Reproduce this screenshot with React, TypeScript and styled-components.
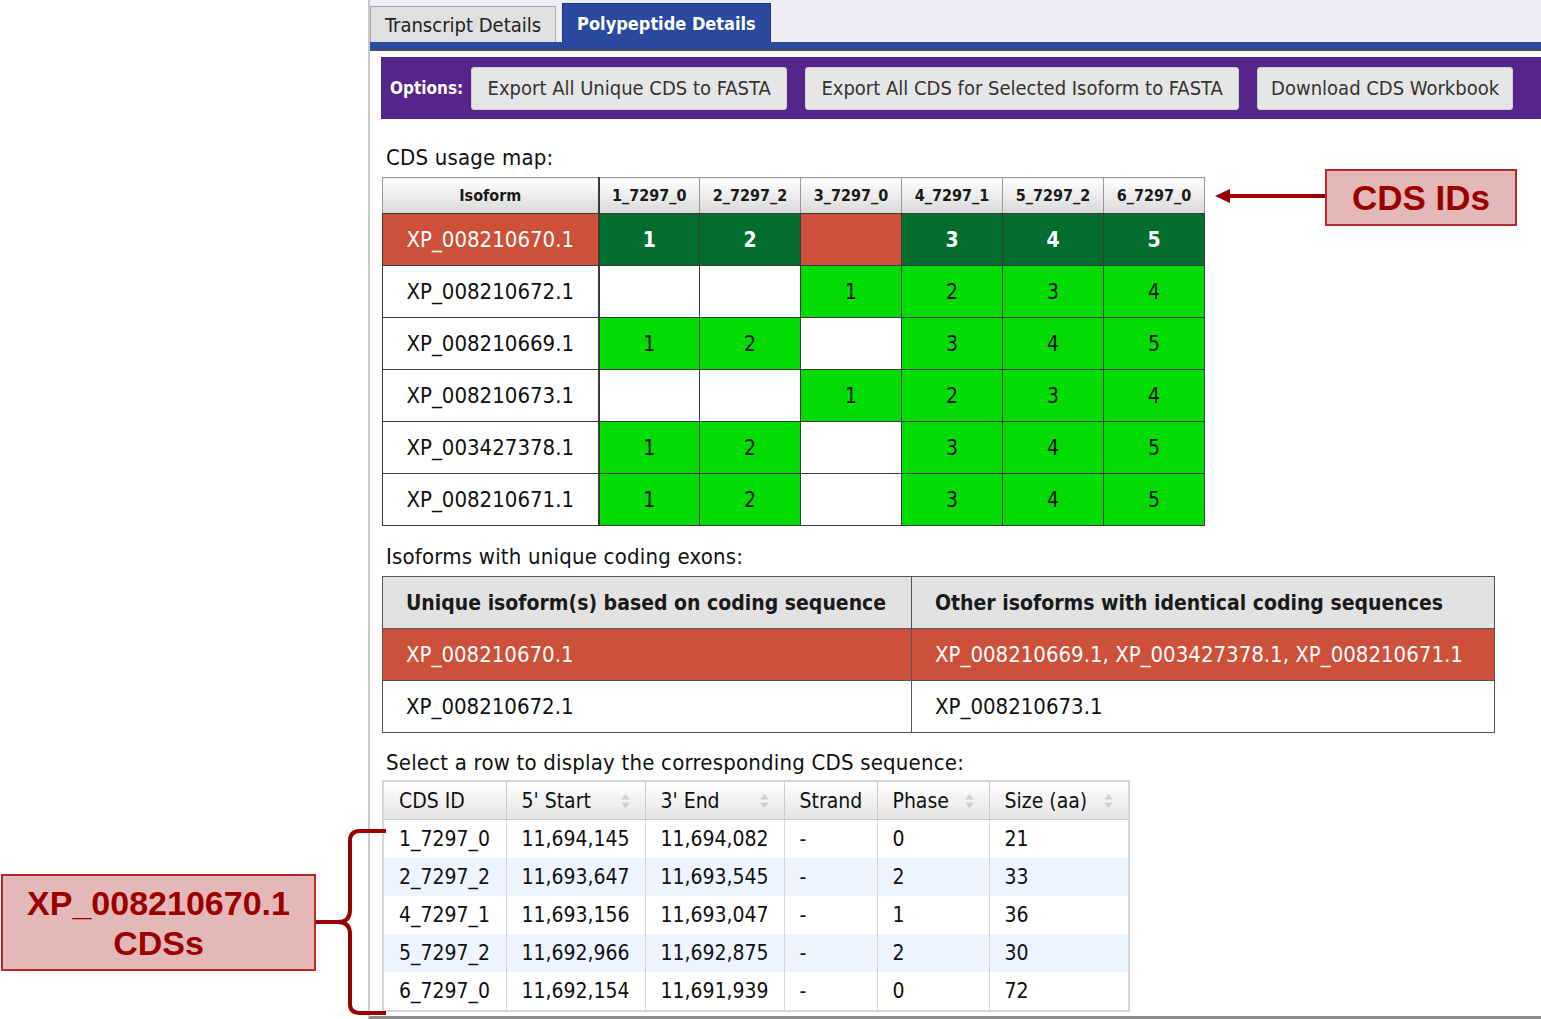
import React from 'react';
import styled, { createGlobalStyle } from 'styled-components';

const GlobalStyle = createGlobalStyle`
  html, body {
    margin: 0;
    padding: 0;
    background: #ffffff;
  }
  body {
    font-family: "DejaVu Sans Condensed", "DejaVu Sans", sans-serif;
    font-stretch: condensed;
    color: #111111;
  }
`;

const Page = styled.div`
  position: relative;
  display: flex;
  width: 1541px;
  height: 1019px;
  overflow: hidden;
`;

const Gutter = styled.div`
  width: 368px;
  flex-shrink: 0;
`;

const Panel = styled.div`
  flex: 1;
  box-sizing: border-box;
  height: 1019px;
  border-left: 2px solid #c9c9c9;
  border-bottom: 3px solid #8c8c8c;
  display: flex;
  flex-direction: column;
`;

const TabStrip = styled.div`
  height: 42px;
  background: #eeedf6;
  display: flex;
  align-items: flex-end;
  gap: 6px;
`;

const Tab = styled.div<{ $active?: boolean }>`
  box-sizing: border-box;
  height: ${(p) => (p.$active ? '39px' : '36px')};
  padding: 0 14px;
  display: flex;
  align-items: center;
  white-space: nowrap;
  font-size: ${(p) => (p.$active ? '18px' : '20px')};
  font-weight: ${(p) => (p.$active ? 700 : 400)};
  color: ${(p) => (p.$active ? '#ffffff' : '#222222')};
  background: ${(p) => (p.$active ? '#2b4a9f' : '#e0e0e0')};
  border: 1px solid ${(p) => (p.$active ? '#1f3578' : '#a9a9a9')};
  border-bottom: none;
`;

const TabRule = styled.div`
  height: 7px;
  background: #2b4a9f;
  border-bottom: 2px solid #4a4f5c;
`;

const Content = styled.div`
  padding: 6px 0 0 11px;
`;

const OptionsBar = styled.div`
  height: 62px;
  background: #55258b;
  display: flex;
  align-items: center;
  gap: 18px;
  padding: 0 9px;
`;

const OptionsLabel = styled.span`
  color: #ffffff;
  font-weight: 700;
  font-size: 17px;
  white-space: nowrap;
  margin-right: -10px;
`;

const OptionButton = styled.button<{ $width: number }>`
  flex-shrink: 0;
  width: ${(p) => p.$width}px;
  height: 43px;
  padding: 0;
  white-space: nowrap;
  font-family: inherit;
  font-stretch: inherit;
  font-size: 20px;
  color: #333333;
  background: #e6e6e6;
  border: 1px solid #cfcfcf;
  border-radius: 3px;
`;

const SectionLabel = styled.div<{ $top: number }>`
  margin: ${(p) => p.$top}px 0 7px 5px;
  font-size: 22px;
  letter-spacing: 0.2px;
  line-height: 24px;
  color: #111111;
`;

const MapTable = styled.table`
  border-collapse: collapse;
  table-layout: fixed;
  width: 823px;
  margin-left: 1px;
  border: 1px solid #3a3a3a;
`;

const MapHead = styled.th<{ $first?: boolean }>`
  height: 35px;
  padding: 0;
  font-size: 16px;
  font-weight: 700;
  color: #1a1a1a;
  background: linear-gradient(#ffffff, #d9d9d9);
  border: 1px solid #9a9a9a;
  border-right: ${(p) => (p.$first ? '2px solid #3a3a3a' : '1px solid #9a9a9a')};
  border-bottom: 1px solid #3a3a3a;
`;

const IsoformCell = styled.td<{ $selected?: boolean }>`
  height: 51px;
  padding: 0;
  text-align: center;
  font-size: 22px;
  color: ${(p) => (p.$selected ? '#ffffff' : '#111111')};
  background: ${(p) => (p.$selected ? '#cd503b' : '#ffffff')};
  border: 1px solid #3a3a3a;
  border-right: 2px solid #3a3a3a;
`;

const UsageCell = styled.td<{ $kind: 'dark' | 'bright' | 'red' | 'empty' }>`
  padding: 0;
  text-align: center;
  font-size: 21px;
  font-weight: ${(p) => (p.$kind === 'dark' ? 700 : 400)};
  color: ${(p) => (p.$kind === 'dark' ? '#ffffff' : '#111111')};
  background: ${(p) =>
    p.$kind === 'dark'
      ? '#036c2f'
      : p.$kind === 'bright'
      ? '#02dc02'
      : p.$kind === 'red'
      ? '#cd503b'
      : '#ffffff'};
  border: 1px solid #3a3a3a;
`;

const UniqueTable = styled.table`
  border-collapse: collapse;
  table-layout: fixed;
  width: 1112px;
  margin-left: 1px;
  border: 1px solid #555555;
`;

const UniqueHead = styled.th`
  height: 51px;
  padding: 0 0 0 23px;
  text-align: left;
  font-size: 21px;
  font-weight: 700;
  color: #1a1a1a;
  background: #e2e2e2;
  border: 1px solid #555555;
`;

const UniqueCell = styled.td<{ $selected?: boolean }>`
  height: 51px;
  padding: 0 0 0 23px;
  font-size: 22px;
  color: ${(p) => (p.$selected ? '#ffffff' : '#111111')};
  background: ${(p) => (p.$selected ? '#cd503b' : '#ffffff')};
  border: 1px solid #555555;
`;

const CdsTable = styled.table`
  border-collapse: collapse;
  table-layout: fixed;
  width: 746px;
  margin: -2px 0 0 1px;
  border: 2px solid #d6d6d6;
`;

const CdsHead = styled.th`
  height: 37px;
  padding: 0 14px 0 15px;
  text-align: left;
  font-size: 21px;
  font-weight: 400;
  color: #111111;
  background: linear-gradient(#ffffff, #e4e4e4);
  border: 1px solid #cccccc;
`;

const HeadInner = styled.div`
  display: flex;
  align-items: center;
  justify-content: space-between;
`;

const CdsRow = styled.tr<{ $striped?: boolean }>`
  background: ${(p) => (p.$striped ? '#edf4ff' : '#ffffff')};
`;

const CdsCell = styled.td`
  height: 38px;
  padding: 0 15px;
  font-size: 21px;
  color: #111111;
  border-left: 1px solid #d6d6d6;
  border-right: 1px solid #d6d6d6;
`;

const Callout = styled.div<{ $size: number }>`
  position: absolute;
  box-sizing: border-box;
  display: flex;
  align-items: center;
  justify-content: center;
  text-align: center;
  background: #e4b8b8;
  border: 2px solid #b52a2a;
  color: #9a0000;
  font-family: "Liberation Sans", Arial, sans-serif;
  font-stretch: normal;
  font-weight: 700;
  font-size: ${(p) => p.$size}px;
  line-height: 40px;
`;

const Overlay = styled.svg`
  position: absolute;
  overflow: visible;
`;

type MapRow = { id: string; cells: (number | null)[]; selected?: boolean };

const cdsIds = ['1_7297_0', '2_7297_2', '3_7297_0', '4_7297_1', '5_7297_2', '6_7297_0'];

const mapRows: MapRow[] = [
  { id: 'XP_008210670.1', cells: [1, 2, null, 3, 4, 5], selected: true },
  { id: 'XP_008210672.1', cells: [null, null, 1, 2, 3, 4] },
  { id: 'XP_008210669.1', cells: [1, 2, null, 3, 4, 5] },
  { id: 'XP_008210673.1', cells: [null, null, 1, 2, 3, 4] },
  { id: 'XP_003427378.1', cells: [1, 2, null, 3, 4, 5] },
  { id: 'XP_008210671.1', cells: [1, 2, null, 3, 4, 5] },
];

const cdsColumns = [
  { label: 'CDS ID', width: 123, sortable: false },
  { label: "5' Start", width: 139, sortable: true },
  { label: "3' End", width: 139, sortable: true },
  { label: 'Strand', width: 93, sortable: false },
  { label: 'Phase', width: 112, sortable: true },
  { label: 'Size (aa)', width: 140, sortable: true },
];

const cdsRows = [
  ['1_7297_0', '11,694,145', '11,694,082', '-', '0', '21'],
  ['2_7297_2', '11,693,647', '11,693,545', '-', '2', '33'],
  ['4_7297_1', '11,693,156', '11,693,047', '-', '1', '36'],
  ['5_7297_2', '11,692,966', '11,692,875', '-', '2', '30'],
  ['6_7297_0', '11,692,154', '11,691,939', '-', '0', '72'],
];

function cellKind(row: MapRow, value: number | null) {
  if (row.selected) return value === null ? 'red' : 'dark';
  return value === null ? 'empty' : 'bright';
}

const SortIcon = () => (
  <svg width="11" height="16" viewBox="0 0 11 16">
    <path d="M5.5 1 L10 6.5 H1 Z" fill="#cfcfcf" />
    <path d="M5.5 15 L10 9.5 H1 Z" fill="#cfcfcf" />
  </svg>
);

export default function App() {
  return (
    <>
      <GlobalStyle />
      <Page>
        <Gutter />
        <Panel>
          <TabStrip>
            <Tab>Transcript Details</Tab>
            <Tab $active>Polypeptide Details</Tab>
          </TabStrip>
          <TabRule />
          <Content>
            <OptionsBar>
              <OptionsLabel>Options:</OptionsLabel>
              <OptionButton $width={316}>Export All Unique CDS to FASTA</OptionButton>
              <OptionButton $width={434}>Export All CDS for Selected Isoform to FASTA</OptionButton>
              <OptionButton $width={256}>Download CDS Workbook</OptionButton>
            </OptionsBar>

            <SectionLabel $top={27}>CDS usage map:</SectionLabel>
            <MapTable>
              <colgroup>
                <col style={{ width: 216 }} />
                {cdsIds.map((id) => (
                  <col key={id} style={{ width: 101 }} />
                ))}
              </colgroup>
              <thead>
                <tr>
                  <MapHead $first>Isoform</MapHead>
                  {cdsIds.map((id) => (
                    <MapHead key={id}>{id}</MapHead>
                  ))}
                </tr>
              </thead>
              <tbody>
                {mapRows.map((row) => (
                  <tr key={row.id}>
                    <IsoformCell $selected={row.selected}>{row.id}</IsoformCell>
                    {row.cells.map((value, i) => (
                      <UsageCell key={i} $kind={cellKind(row, value)}>
                        {value ?? ''}
                      </UsageCell>
                    ))}
                  </tr>
                ))}
              </tbody>
            </MapTable>

            <SectionLabel $top={19}>Isoforms with unique coding exons:</SectionLabel>
            <UniqueTable>
              <colgroup>
                <col style={{ width: 529 }} />
                <col style={{ width: 583 }} />
              </colgroup>
              <thead>
                <tr>
                  <UniqueHead>Unique isoform(s) based on coding sequence</UniqueHead>
                  <UniqueHead>Other isoforms with identical coding sequences</UniqueHead>
                </tr>
              </thead>
              <tbody>
                <tr>
                  <UniqueCell $selected>XP_008210670.1</UniqueCell>
                  <UniqueCell $selected>XP_008210669.1, XP_003427378.1, XP_008210671.1</UniqueCell>
                </tr>
                <tr>
                  <UniqueCell>XP_008210672.1</UniqueCell>
                  <UniqueCell>XP_008210673.1</UniqueCell>
                </tr>
              </tbody>
            </UniqueTable>

            <SectionLabel $top={18}>Select a row to display the corresponding CDS sequence:</SectionLabel>
            <CdsTable>
              <colgroup>
                {cdsColumns.map((c) => (
                  <col key={c.label} style={{ width: c.width }} />
                ))}
              </colgroup>
              <thead>
                <tr>
                  {cdsColumns.map((c) => (
                    <CdsHead key={c.label}>
                      <HeadInner>
                        <span>{c.label}</span>
                        {c.sortable && <SortIcon />}
                      </HeadInner>
                    </CdsHead>
                  ))}
                </tr>
              </thead>
              <tbody>
                {cdsRows.map((row, i) => (
                  <CdsRow key={row[0]} $striped={i % 2 === 1}>
                    {row.map((v, j) => (
                      <CdsCell key={j}>{v}</CdsCell>
                    ))}
                  </CdsRow>
                ))}
              </tbody>
            </CdsTable>
          </Content>
        </Panel>

        <Overlay width="112" height="16" style={{ left: 1214, top: 188 }} viewBox="0 0 112 16">
          <line x1="14" y1="8" x2="112" y2="8" stroke="#9a0000" strokeWidth="4" />
          <path d="M1 8 L16 1 L16 15 Z" fill="#9a0000" />
        </Overlay>
        <Callout $size={35} style={{ left: 1325, top: 169, width: 192, height: 57 }}>
          CDS IDs
        </Callout>

        <Callout $size={34} style={{ left: 1, top: 874, width: 315, height: 97 }}>
          XP_008210670.1
          <br />
          CDSs
        </Callout>
        <Overlay width="80" height="192" style={{ left: 314, top: 826 }} viewBox="0 0 80 192">
          <path
            d="M72 5 H46 Q36 5 36 15 V84 Q36 96 24 96 H2 M24 96 Q36 96 36 108 V178 Q36 187 46 187 H72"
            fill="none"
            stroke="#9a0000"
            strokeWidth="4"
          />
        </Overlay>
      </Page>
    </>
  );
}
